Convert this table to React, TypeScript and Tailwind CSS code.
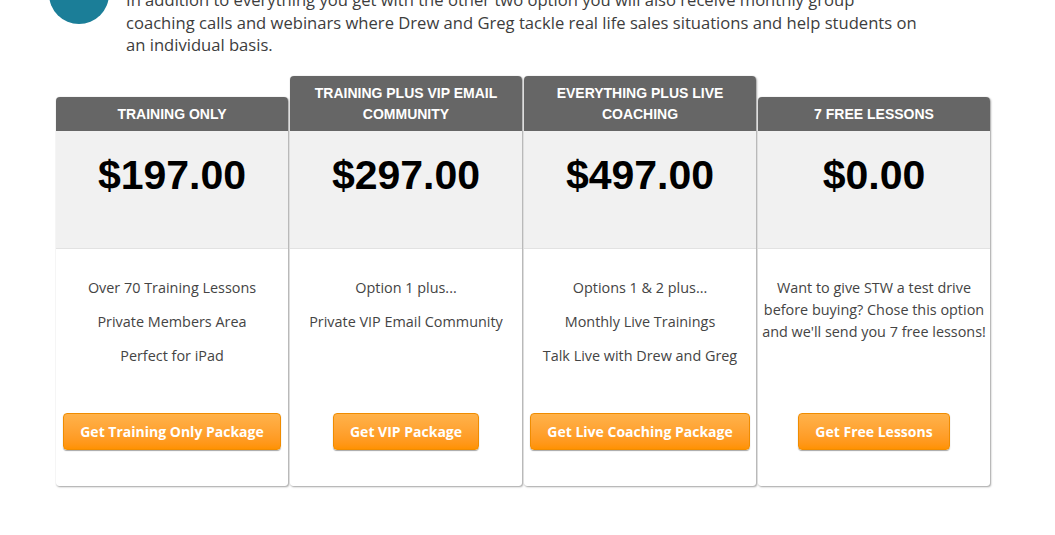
import React from 'react';

type Plan = {
  title: string[];
  price: string;
  features: string[];
  paragraph?: boolean;
  button: string;
};

const plans: Plan[] = [
  {
    title: ['TRAINING ONLY'],
    price: '$197.00',
    features: ['Over 70 Training Lessons', 'Private Members Area', 'Perfect for iPad'],
    button: 'Get Training Only Package',
  },
  {
    title: ['TRAINING PLUS VIP EMAIL', 'COMMUNITY'],
    price: '$297.00',
    features: ['Option 1 plus...', 'Private VIP Email Community'],
    button: 'Get VIP Package',
  },
  {
    title: ['EVERYTHING PLUS LIVE', 'COACHING'],
    price: '$497.00',
    features: ['Options 1 & 2 plus...', 'Monthly Live Trainings', 'Talk Live with Drew and Greg'],
    button: 'Get Live Coaching Package',
  },
  {
    title: ['7 FREE LESSONS'],
    price: '$0.00',
    features: ["Want to give STW a test drive before buying? Chose this option and we'll send you 7 free lessons!"],
    paragraph: true,
    button: 'Get Free Lessons',
  },
];

const PlanCard: React.FC<{ plan: Plan }> = ({ plan }) => (
  <div className="w-[232px] bg-white rounded-t-[4px] rounded-b-[3px] shadow-[1px_1px_2px_rgba(0,0,0,0.35),0_0_1px_rgba(0,0,0,0.25)]">
    {/* Header */}
    <div className="bg-[#666666] rounded-t-[4px] pt-[7px] pb-[6px] px-2 text-center text-white text-[14px] font-bold leading-[21px] font-['Liberation_Sans',Arial,sans-serif]">
      {plan.title.map((t) => (
        <div key={t}>{t}</div>
      ))}
    </div>

    {/* Price */}
    <div className="h-[118px] bg-[#f1f1f1] border-b border-[#e2e2e2] pt-[20px] text-center text-black text-[41px] font-bold leading-[48px] font-['Liberation_Sans',Arial,sans-serif]">
      {plan.price}
    </div>

    {/* Features + button */}
    <div className="pt-[28px] pb-[36px] flex flex-col items-center font-['Open_Sans',sans-serif]">
      <div className="h-[136px] w-full px-[4px] text-center text-[14.4px] text-[#444444]">
        {plan.features.map((f) => (
          <p key={f} className={plan.paragraph ? 'leading-[22px]' : 'leading-[22px] mb-[12px]'}>
            {f}
          </p>
        ))}
      </div>
      <button className="h-[37px] px-[16px] rounded-[4px] border border-[#f08c00] bg-gradient-to-b from-[#ffb24a] to-[#ff9200] shadow-[0_1px_1px_rgba(0,0,0,0.35)] text-white text-[14px] font-bold">
        {plan.button}
      </button>
    </div>
  </div>
);

export default function App() {
  return (
    <div className="w-[1055px] h-[535px] overflow-hidden bg-white">
      {/* Intro */}
      <div className="-mt-[18px] ml-[49px] flex gap-[17px]">
        <div className="w-[60px] h-[60px] rounded-full bg-[#1b7e98] -mt-[18px] shrink-0" />
        <p className="w-[795px] pt-[7px] text-[16.6px] leading-[22.5px] text-[#3d3d3d] font-['Open_Sans',sans-serif]">
          In addition to everything you get with the other two option you will also receive monthly group coaching calls and webinars where Drew and Greg tackle real life sales situations and help students on an individual basis.
        </p>
      </div>

      {/* Plans */}
      <div className="mt-[19px] ml-[56px] flex items-end gap-[2px]">
        {plans.map((p) => (
          <PlanCard key={p.price} plan={p} />
        ))}
      </div>
    </div>
  );
}
